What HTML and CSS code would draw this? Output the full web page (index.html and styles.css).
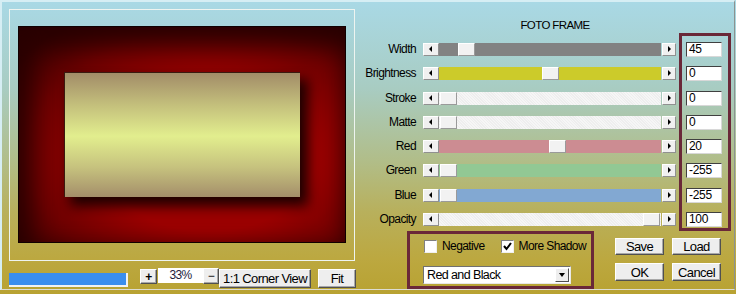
FILE: index.html
```html
<!DOCTYPE html>
<html lang="en">
<head>
  <meta charset="UTF-8">
  <title>Foto Frame</title>
  <link rel="stylesheet" href="styles.css">
</head>
<body>
  <div class="window">
    <!-- Preview side -->
    <div class="left">
      <div class="preview">
        <div class="frame"><div class="photo"></div></div>
      </div>
      <div class="toolbar">
        <div class="progress"></div>
        <button class="btn plus-btn">+</button>
        <div class="zoom-field">33%</div>
        <button class="btn minus-btn">&minus;</button>
        <button class="btn corner-btn">1:1 Corner View</button>
        <button class="btn fit-btn">Fit</button>
      </div>
    </div>

    <!-- Settings side -->
    <div class="right">
      <div class="title">FOTO FRAME</div>
      <div class="controls">
        <div class="sliders">
          <div class="row"><span class="label">Width</span><span class="arrow arrow-left"></span><div class="track track-gray"><span class="thumb" style="margin-left:19px"></span></div><span class="arrow arrow-right"></span></div>
          <div class="row"><span class="label">Brightness</span><span class="arrow arrow-left"></span><div class="track track-yellow"><span class="thumb" style="margin-left:103px"></span></div><span class="arrow arrow-right"></span></div>
          <div class="row"><span class="label">Stroke</span><span class="arrow arrow-left"></span><div class="track track-white"><span class="thumb" style="margin-left:1px"></span></div><span class="arrow arrow-right"></span></div>
          <div class="row"><span class="label">Matte</span><span class="arrow arrow-left"></span><div class="track track-white"><span class="thumb" style="margin-left:1px"></span></div><span class="arrow arrow-right"></span></div>
          <div class="row"><span class="label">Red</span><span class="arrow arrow-left"></span><div class="track track-red"><span class="thumb" style="margin-left:110px"></span></div><span class="arrow arrow-right"></span></div>
          <div class="row"><span class="label">Green</span><span class="arrow arrow-left"></span><div class="track track-green"><span class="thumb" style="margin-left:1px"></span></div><span class="arrow arrow-right"></span></div>
          <div class="row"><span class="label">Blue</span><span class="arrow arrow-left"></span><div class="track track-blue"><span class="thumb" style="margin-left:1px"></span></div><span class="arrow arrow-right"></span></div>
          <div class="row"><span class="label">Opacity</span><span class="arrow arrow-left"></span><div class="track track-white"><span class="thumb" style="margin-left:204px"></span></div><span class="arrow arrow-right"></span></div>
        </div>
        <div class="values">
          <div class="value">45</div>
          <div class="value">0</div>
          <div class="value">0</div>
          <div class="value">0</div>
          <div class="value">20</div>
          <div class="value">-255</div>
          <div class="value">-255</div>
          <div class="value">100</div>
        </div>
      </div>

      <div class="bottom">
        <div class="options">
          <div class="checks">
            <label class="check"><span class="box"></span>Negative</label>
            <label class="check"><span class="box"><svg width="11" height="11" viewBox="0 0 11 11"><path d="M2 5 L4.5 8 L9 2" fill="none" stroke="#000" stroke-width="2"/></svg></span>More Shadow</label>
          </div>
          <div class="select">
            <span class="select-text">Red and Black</span>
            <span class="select-arrow"></span>
          </div>
        </div>
        <div class="actions">
          <button class="btn">Save</button>
          <button class="btn">Load</button>
          <button class="btn action-tall">OK</button>
          <button class="btn action-tall">Cancel</button>
        </div>
      </div>
    </div>
  </div>
</body>
</html>
```

FILE: styles.css
```css
html, body {
  margin: 0;
  padding: 0;
}

body {
  width: 736px;
  height: 294px;
  overflow: hidden;
  font-family: "Liberation Sans", Arial, sans-serif;
  font-size: 12px;
  letter-spacing: -0.6px;
  color: #000;
  background: linear-gradient(to bottom, #a9d9e6 0%, #a8ccc2 30%, #b1bd88 55%, #b8b05c 72%, #bca840 88%, #b8a232 100%);
}

.window {
  display: flex;
  width: 732px;
  height: 287px;
  border-top: 2px solid #d6eef4;
  border-left: 2px solid #d6eef4;
  border-right: 1px solid #8c9290;
  border-bottom: 1px solid #dcdcd2;
}

/* Preview side */
.left {
  width: 358px;
  padding-left: 7px;
  padding-top: 7px;
  box-sizing: border-box;
}

.preview {
  width: 346px;
  height: 252px;
  box-sizing: border-box;
  border: 1px solid #eef4f0;
  padding: 16px 0 0 8px;
}

.frame {
  width: 328px;
  height: 217px;
  box-sizing: border-box;
  border: 1px solid #100000;
  padding: 45px;
  background: radial-gradient(ellipse 72% 76% at 58% 60%, #9c0000 46%, #6c0000 76%, #360000 100%);
  box-shadow: inset 6px 12px 24px 4px #280000;
}

.photo {
  width: 236px;
  height: 125px;
  box-sizing: border-box;
  border-top: 1px solid #3a1a10;
  border-left: 1px solid #3a1a10;
  background: linear-gradient(to bottom, #a28c68 0%, #c4c07c 26%, #e2ee8e 51%, #c6c27e 76%, #a48e6a 100%);
  box-shadow: 7px 8px 12px 1px rgba(22, 0, 0, 0.95);
}

.toolbar {
  display: flex;
  align-items: flex-start;
  margin-top: 7px;
}

.progress {
  width: 119px;
  height: 14px;
  margin-top: 5px;
  box-sizing: border-box;
  background: #3a8eee;
  border-right: 2px solid #f2f2f2;
  border-bottom: 2px solid #f2f2f2;
}

.btn {
  font: inherit;
  letter-spacing: inherit;
  color: #000;
  padding: 0;
  margin: 0;
  box-sizing: border-box;
  background: #eeeeee;
  border: 1px solid;
  border-color: #ffffff #505050 #505050 #ffffff;
  box-shadow: inset -1px -1px 0 #a8a8a8;
  cursor: pointer;
}

.plus-btn {
  width: 17px;
  height: 15px;
  margin-left: 12px;
  margin-top: 1px;
  font-weight: bold;
  line-height: 12px;
}

.zoom-field {
  width: 45px;
  height: 15px;
  line-height: 14px;
  margin-left: 1px;
  text-align: center;
  background: #fff;
  color: #1c1c3a;
}

.minus-btn {
  width: 16px;
  height: 16px;
  line-height: 12px;
}

.corner-btn {
  width: 92px;
  height: 19px;
  margin-top: 1px;
  font-size: 13px;
}

.fit-btn {
  width: 38px;
  height: 19px;
  margin-top: 1px;
  margin-left: 7px;
  font-size: 13px;
}

/* Settings side */
.right {
  width: 372px;
}

.title {
  width: 264px;
  margin-left: 63px;
  margin-top: 17px;
  height: 13px;
  line-height: 13px;
  text-align: center;
  font-size: 11.5px;
}

.controls {
  display: flex;
  margin-top: 1px;
}

.sliders {
  display: flex;
  flex-direction: column;
  gap: 11.29px;
  padding-top: 10px;
}

.row {
  display: flex;
  align-items: center;
  height: 13px;
}

.label {
  width: 56px;
  padding-right: 7px;
  text-align: right;
  line-height: 13px;
}

.arrow {
  position: relative;
  width: 16px;
  height: 13px;
  box-sizing: border-box;
  background: #f0f0f0;
  border: 1px solid;
  border-color: #ffffff #909090 #909090 #ffffff;
}

.arrow-right {
  width: 14px;
  margin-left: 1px;
}

.arrow::after {
  content: "";
  position: absolute;
  top: 2px;
  border-top: 3px solid transparent;
  border-bottom: 3px solid transparent;
}

.arrow-left::after {
  left: 5px;
  border-right: 3px solid #000;
}

.arrow-right::after {
  left: 5px;
  border-left: 3px solid #000;
}

.track {
  display: flex;
  width: 222px;
  height: 13px;
}

.track-gray { background: #828282; }
.track-yellow { background: #cccb2a; }
.track-white { background: repeating-linear-gradient(45deg, #f6f6f6 0 1px, #eeeeee 1px 2px); }
.track-red { background: #cc8c92; }
.track-green { background: #92c894; }
.track-blue { background: #82a8d2; }

.thumb {
  width: 17px;
  height: 13px;
  box-sizing: border-box;
  background: #f2f2f2;
  border: 1px solid;
  border-color: #ffffff #9a9a9a #9a9a9a #ffffff;
}

.values {
  display: flex;
  flex-direction: column;
  gap: 9.29px;
  width: 52px;
  height: 198px;
  margin-left: 3px;
  box-sizing: border-box;
  border: 3px solid #6a2838;
  padding: 6px 0 0 4px;
}

.value {
  width: 36px;
  height: 15px;
  box-sizing: border-box;
  padding-left: 2px;
  line-height: 13px;
  background: #fff;
  border: 1px solid;
  border-color: #404040 #d8d8d8 #d8d8d8 #404040;
  letter-spacing: -0.3px;
}

.bottom {
  display: flex;
  margin-left: 47px;
}

.options {
  width: 187px;
  height: 58px;
  box-sizing: border-box;
  border: 3px solid #6a2838;
  padding: 6px 0 0 13px;
}

.checks {
  display: flex;
  gap: 16px;
  height: 13px;
  padding-left: 1px;
  white-space: nowrap;
}

.check {
  display: flex;
  align-items: center;
  gap: 5px;
  line-height: 13px;
  font-size: 12px;
  white-space: nowrap;
}

.box {
  display: flex;
  align-items: center;
  justify-content: center;
  flex-shrink: 0;
  width: 13px;
  height: 13px;
  box-sizing: border-box;
  background: #fff;
  border: 1px solid;
  border-color: #808080 #f0f0f0 #f0f0f0 #808080;
}

.select {
  display: flex;
  align-items: center;
  justify-content: space-between;
  width: 148px;
  height: 18px;
  margin-top: 13px;
  box-sizing: border-box;
  background: #fff;
  border: 1px solid;
  border-color: #707070 #e8e8e8 #e8e8e8 #707070;
  padding: 0 1px 0 3px;
  font-size: 12.5px;
}

.select-arrow {
  position: relative;
  width: 14px;
  height: 14px;
  box-sizing: border-box;
  background: #eeeeee;
  border: 1px solid;
  border-color: #ffffff #505050 #505050 #ffffff;
}

.select-arrow::after {
  content: "";
  position: absolute;
  left: 3px;
  top: 4px;
  border-left: 3px solid transparent;
  border-right: 3px solid transparent;
  border-top: 4px solid #000;
}

.actions {
  display: grid;
  grid-template-columns: 49px 49px;
  grid-template-rows: 17px 18px;
  gap: 8px;
  margin-left: 21px;
  padding-top: 7px;
}

.actions .btn {
  font-size: 13px;
}
```
